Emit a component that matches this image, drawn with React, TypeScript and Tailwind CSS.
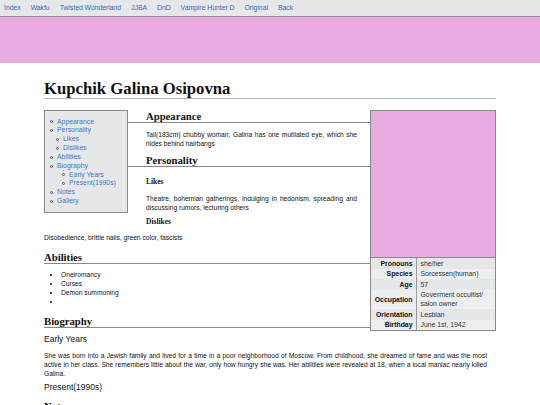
import React from "react";

function TocItem({ level, children }: { level: number; children: React.ReactNode }) {
  const pad = level === 0 ? "pl-[5px]" : level === 1 ? "pl-[11px]" : "pl-[17px]";
  return (
    <li className={`flex items-center h-[8.85px] ${pad}`}>
      <span className="w-[3px] h-[3px] rounded-full border-[0.8px] border-[#555] mr-[4px] shrink-0" />
      <span>{children}</span>
    </li>
  );
}

const h2c = "font-['Liberation_Serif',serif] font-bold text-[10.7px] leading-[12px] border-b border-[#888]";
const h3c = "font-['Liberation_Serif',serif] font-bold text-[7.5px] leading-[9px]";

export default function App() {
  const nav = ["Index", "Wakfu", "Twisted Wonderland", "JJBA", "DnD", "Vampire Hunter D", "Original", "Back"];
  const rows: [string, React.ReactNode][] = [
    ["Pronouns", "she/her"],
    ["Species", "Sorcessen(human)"],
    ["Age", "57"],
    ["Occupation", <>Goverment occultist/ salon owner</>],
    ["Orientation", "Lesbian"],
    ["Birthday", "June 1st, 1942"],
  ];
  return (
    <div className="min-h-[405px] bg-white text-[#111] font-['Liberation_Sans',Arial,sans-serif]">
      <nav className="h-[17px] bg-[#e6e7e9] border-b border-[#9b8c9b] flex items-center gap-[10px] px-[4px] text-[6.8px] text-[#2f6cbf]">
        {nav.map((n) => (
          <a key={n} className="leading-none">{n}</a>
        ))}
      </nav>
      <div className="h-[46px] bg-[#e8abe0]" />
      <main className="mx-[44px] w-[452px]">
        <h1 className="mt-[17px] font-['Liberation_Serif',serif] font-bold text-[16.7px] leading-[18px] border-b-[1.5px] border-[#b4b4b4]">
          Kupchik Galina Osipovna
        </h1>
        <div className="mt-[11px] text-[6.67px] leading-[9px]">
          <div className="float-left w-[84px] h-[103px] mr-[18px] mb-[10px] bg-[#e6e7e9] border border-[#888] pt-[6.5px]">
            <ul className="text-[6.86px] leading-[8.85px] text-[#3b78d0]">
              <TocItem level={0}>Appearance</TocItem>
              <TocItem level={0}>Personality</TocItem>
              <TocItem level={1}>Likes</TocItem>
              <TocItem level={1}>Dislikes</TocItem>
              <TocItem level={0}>Abilities</TocItem>
              <TocItem level={0}>Biography</TocItem>
              <TocItem level={2}>Early Years</TocItem>
              <TocItem level={2}>Present(1990s)</TocItem>
              <TocItem level={0}>Notes</TocItem>
              <TocItem level={0}>Gallery</TocItem>
            </ul>
          </div>
          <div className="float-right w-[126px] ml-[13px] border border-[#888] bg-[#e9eaec]">
            <div className="h-[147px] bg-[#e8abe0] border-b border-[#888]" />
            <table className="w-full border-collapse text-[6.86px] leading-[9px]">
              <tbody>
                {rows.map(([k, v], i) => (
                  <tr key={k} className={i % 2 === 0 ? "bg-[#e6e7e9]" : "bg-[#eceef0]"}>
                    <td className="w-[45px] text-right font-bold pr-[3px] py-[0.75px] border-r border-[#999] align-middle">{k}</td>
                    <td className="pl-[4px] pr-[2px] py-[0.75px] text-[#333] align-middle">{v}</td>
                  </tr>
                ))}
              </tbody>
            </table>
          </div>
          <h2 className={h2c}>Appearance</h2>
          <p className="mt-[7px] mr-[9px] text-justify">
            Tall(183cm) chubby woman; Galina has one mutilated eye, which she hides behind hairbangs
          </p>
          <h2 className={`mt-[6px] ${h2c}`}>Personality</h2>
          <h3 className={`mt-[10px] ${h3c}`}>Likes</h3>
          <p className="mt-[8px] mr-[9px] text-justify">
            Theatre, bohemian gatherings, indulging in hedonism, spreading and discussing rumors, lecturing others
          </p>
          <h3 className={`mt-[5px] ${h3c}`}>Dislikes</h3>
          <p className="mt-[7px] mr-[9px]">Disobedience, brittle nails, green color, fascists</p>
          <h2 className={`mt-[8.5px] ${h2c}`}>Abilities</h2>
          <ul className="mt-[6px] list-disc pl-[17px]">
            <li>Oneiromancy</li>
            <li>Curses</li>
            <li>Demon summoning</li>
            <li>&nbsp;</li>
          </ul>
          <h2 className={`mt-[9px] ${h2c}`}>Biography</h2>
          <h3 className="mt-[6.5px] text-[8.5px] leading-[10px]">Early Years</h3>
          <p className="mt-[6.5px] mr-[9px] text-justify">
            She was born into a Jewish family and lived for a time in a poor neighborhood of Moscow. From childhood, she dreamed of fame and was the most active in her class. She remembers little about the war, only how hungry she was. Her abilities were revealed at 18, when a local maniac nearly killed Galina.
          </p>
          <h3 className="mt-[4px] text-[8.5px] leading-[10px]">Present(1990s)</h3>
          <h2 className={`mt-[8px] ${h2c}`}>Notes</h2>
        </div>
      </main>
    </div>
  );
}
